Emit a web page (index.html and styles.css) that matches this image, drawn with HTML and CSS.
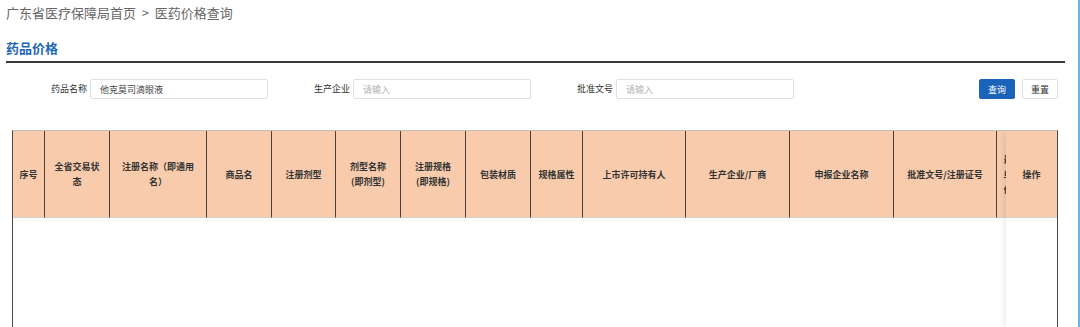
FILE: index.html
```html
<!DOCTYPE html>
<html lang="zh-CN">
<head>
    <meta charset="UTF-8">
    <title>药品价格</title>
    <link rel="stylesheet" href="styles.css">
</head>
<body>
    <div class="page">
        <div class="breadcrumb">广东省医疗保障局首页&nbsp;&nbsp;&gt;&nbsp;&nbsp;医药价格查询</div>

        <div class="section-title">药品价格</div>

        <div class="search-form">
            <div class="form-item">
                <label class="form-label">药品名称</label>
                <input class="form-input" type="text" value="他克莫司滴眼液">
            </div>
            <div class="form-item">
                <label class="form-label">生产企业</label>
                <input class="form-input" type="text" placeholder="请输入">
            </div>
            <div class="form-item">
                <label class="form-label">批准文号</label>
                <input class="form-input" type="text" placeholder="请输入">
            </div>
            <div class="form-buttons">
                <button class="btn btn-primary">查询</button>
                <button class="btn">重置</button>
            </div>
        </div>

        <div class="table-wrap">
            <table class="data-table">
                <colgroup>
                    <col style="width: 32px">
                    <col style="width: 65px">
                    <col style="width: 97px">
                    <col style="width: 65px">
                    <col style="width: 64px">
                    <col style="width: 65px">
                    <col style="width: 65px">
                    <col style="width: 65px">
                    <col style="width: 52px">
                    <col style="width: 103px">
                    <col style="width: 104px">
                    <col style="width: 104px">
                    <col style="width: 103px">
                    <col style="width: 32px">
                    <col style="width: 100px">
                </colgroup>
                <thead>
                    <tr>
                        <th>序号</th>
                        <th class="wide-pad">全省交易状态</th>
                        <th class="wide-pad">注册名称（即通用名）</th>
                        <th class="wide-pad">商品名</th>
                        <th class="wide-pad">注册剂型</th>
                        <th class="wide-pad">剂型名称(即剂型)</th>
                        <th class="wide-pad">注册规格(即规格)</th>
                        <th class="wide-pad">包装材质</th>
                        <th>规格属性</th>
                        <th>上市许可持有人</th>
                        <th>生产企业/厂商</th>
                        <th>申报企业名称</th>
                        <th>批准文号/注册证号</th>
                        <th>最小单位价格</th>
                        <th></th>
                    </tr>
                </thead>
            </table>

            <div class="fixed-col">
                <div class="fixed-head">操作</div>
            </div>
        </div>
    </div>
</body>
</html>
```

FILE: styles.css
```css
* {
    margin: 0;
    padding: 0;
    box-sizing: border-box;
}
html, body {
    height: 327px;
    overflow: hidden;
}
body {
    font-family: "Noto Sans CJK SC", "Noto Sans", sans-serif;
    background: #fff;
    color: #333;
}
.page {
    width: 1080px;
    height: 327px;
    padding-left: 6px;
    border-right: 2px solid #5cb6f1;
    overflow: hidden;
}
.breadcrumb {
    height: 26px;
    line-height: 26px;
    font-size: 13px;
    color: #666;
}
.section-title {
    width: 1059px;
    padding: 12px 0 3px;
    line-height: 20px;
    font-size: 13px;
    font-weight: bold;
    color: #1d66b6;
    border-bottom: 2px solid #3a3a3a;
}
.search-form {
    display: grid;
    grid-template-columns: 263px 263px 263px 1fr;
    width: 1059px;
    margin-top: 16px;
    padding: 0 7px 0 45px;
    height: 20px;
}
.form-item {
    display: flex;
    align-items: center;
    gap: 3px;
}
.form-label {
    font-size: 9px;
    line-height: 20px;
    color: #333;
    white-space: nowrap;
}
.form-input {
    width: 178px;
    height: 20px;
    padding: 0 9px;
    border: 1px solid #dcdfe6;
    border-radius: 2px;
    font-family: inherit;
    font-size: 9px;
    color: #444;
    outline: none;
}
.form-input::placeholder {
    color: #b3b3b3;
}
.form-buttons {
    display: flex;
    justify-content: flex-end;
    gap: 7px;
}
.btn {
    width: 36px;
    height: 20px;
    border: 1px solid #dcdfe6;
    border-radius: 2px;
    background: #fff;
    color: #333;
    font-family: inherit;
    font-size: 9px;
    cursor: pointer;
}
.btn-primary {
    background: #1b63b9;
    border-color: #1b63b9;
    color: #fff;
}
.table-wrap {
    position: relative;
    width: 1046px;
    height: 200px;
    margin: 31px 0 0 6px;
    border-top: 1px solid #bdbdbd;
    border-left: 1px solid #4f4a47;
    border-right: 1px solid #4f4a47;
    overflow: hidden;
}
.data-table {
    width: 1116px;
    table-layout: fixed;
    border-collapse: separate;
    border-spacing: 0;
}
.data-table th {
    height: 87px;
    padding: 0 6px;
    background: #f7cbac;
    border-right: 1px solid #4d3f36;
    border-bottom: 1px solid #cfcfcf;
    font-size: 9px;
    font-weight: bold;
    line-height: 15px;
    color: #333;
    text-align: center;
    vertical-align: middle;
}
.data-table th.wide-pad {
    padding: 0 9px;
}
.fixed-col {
    position: absolute;
    top: 0;
    right: 0;
    bottom: 0;
    width: 51px;
    background: #fff;
    box-shadow: -4px 0 6px -2px rgba(0, 0, 0, 0.08);
}
.fixed-head {
    display: flex;
    align-items: center;
    justify-content: center;
    height: 87px;
    background: #f7cbac;
    border-bottom: 1px solid #cfcfcf;
    font-size: 9px;
    font-weight: bold;
    color: #333;
}
```
